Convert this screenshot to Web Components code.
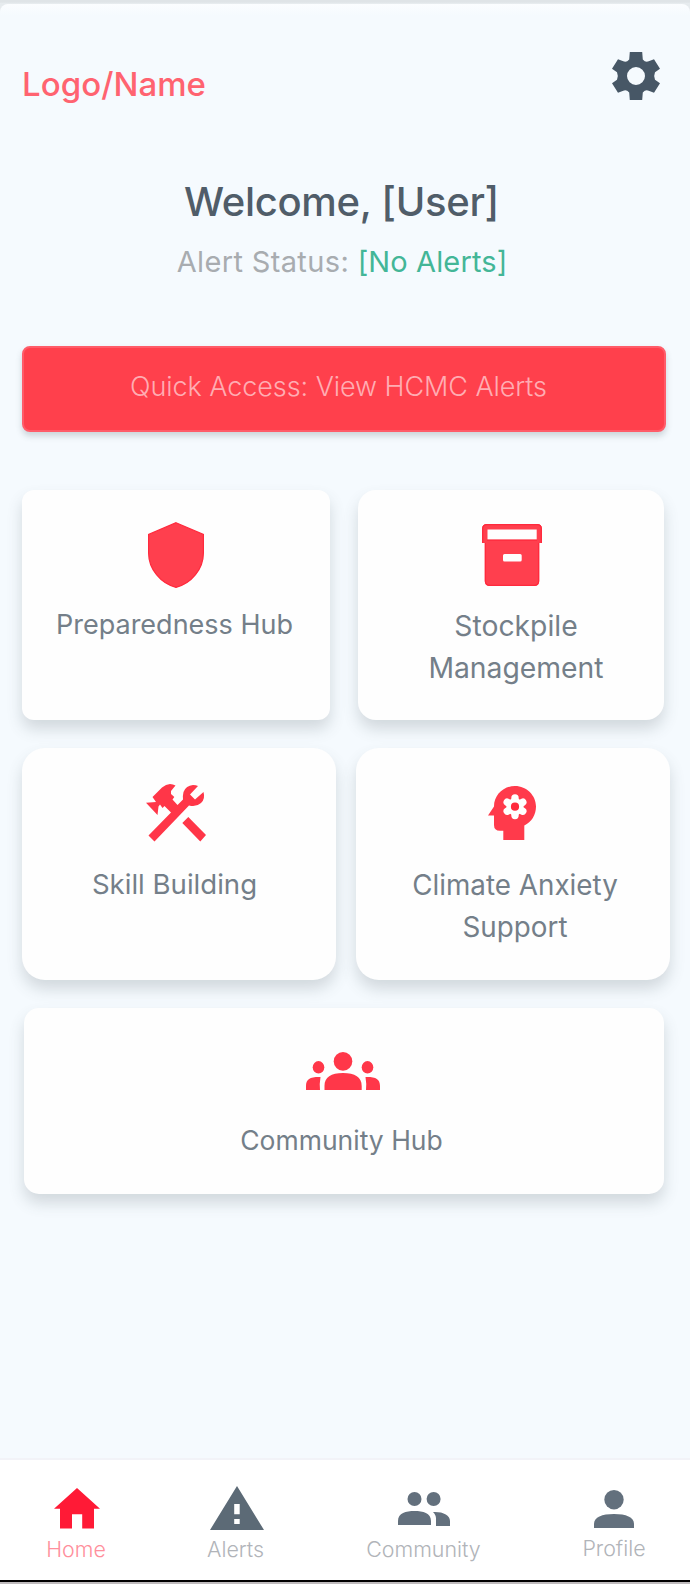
<!DOCTYPE html>
<html lang="en">
<head>
<meta charset="utf-8">
<title>Home</title>
<style>
html, body { margin: 0; padding: 0; }
body { width: 690px; height: 1584px; overflow: hidden; font-family: Inter, "Liberation Sans", sans-serif; }
</style>
</head>
<body>
<app-screen>
  <app-header slot="top">Logo/Name</app-header>
  <app-greeting slot="top" status="[No Alerts]">Welcome, [User]</app-greeting>
  <alert-button>Quick Access: View HCMC Alerts</alert-button>
  <card-row style="--cols:308px 306px;--gap:28px;margin-top:58px;height:230px">
    <hub-card icon="shield" style="--r:12px;--pt:32px;--shift:-3px;--gap:16px">Preparedness Hub</hub-card>
    <hub-card icon="box" style="--r:18px;--pt:34px;--ishift:2px;--shift:10px;--gap:19px;--fs:28.3px">Stockpile<br>Management</hub-card>
  </card-row>
  <card-row style="--cols:314px 314px;--gap:20px;margin-top:28px;height:232px">
    <hub-card icon="tools" style="--r:23px;--pt:36px;--ishift:-6px;--shift:-9px;--gap:21px;--fs:27.6px">Skill Building</hub-card>
    <hub-card icon="mind" style="--r:23px;--pt:38px;--ishift:-2px;--shift:4px;--gap:23.5px;--fs:27.8px">Climate Anxiety<br>Support</hub-card>
  </card-row>
  <card-row style="--cols:640px;margin:28px 0 0 2px;height:186px">
    <hub-card icon="group" style="--r:15px;--pt:44px;--ishift:-2px;--shift:-5px;--gap:29px;--fs:26.5px">Community Hub</hub-card>
  </card-row>
  <app-nav slot="bottom">
    <nav-item icon="home" active>Home</nav-item>
    <nav-item icon="alert">Alerts</nav-item>
    <nav-item icon="people">Community</nav-item>
    <nav-item icon="person" style="padding-left:10px;--up:-1.5px">Profile</nav-item>
  </app-nav>
</app-screen>

<script>
const ICONS = {
  gear: [48, 48, `<path fill-rule="evenodd" d="M17.8 0H30.2L30.8 7.4Q33.5 10.6 36.7 9.2L42 7.2L48 16.7L43 20.3Q41.4 24 43 27.7L48 31.3L42 40.8L36.7 38.8Q33.5 37.4 30.8 40.6L30.2 48H17.8L17.2 40.6Q14.5 37.4 11.3 38.8L6 40.8L0 31.3L5 27.7Q6.6 24 5 20.3L0 16.7L6 7.2L11.3 9.2Q14.5 10.6 17.2 7.4ZM24 15a9 9 0 1 0 0 18a9 9 0 1 0 0-18Z" fill="#475766"/>`],
  shield: [56, 66, `<path d="M28 .7L55.4 12.4V31C55.4 47 43.5 61.5 28 65.4C12.5 61.5.6 47 .6 31V12.4Z" fill="#ff3f4e" stroke="#ff2a3d" stroke-width="1.2"/>`],
  box: [60, 62, `<path fill-rule="evenodd" d="M5 0H55Q60 0 60 5V19H57.2V57Q57.2 62 52 62H8Q2.8 62 2.8 57V19H0V5Q0 0 5 0ZM5.5 5.5V15.7H54.7V5.5ZM22.5 30Q21 30 21 31.5V36Q21 37.5 22.5 37.5H38.2Q39.7 37.5 39.7 36V31.5Q39.7 30 38.2 30Z" fill="#ff3f4e"/><path d="M.7 19V5Q.7 .7 5 .7H55Q59.3 .7 59.3 5V19M3.4 19V57Q3.4 61.4 8 61.4H52Q56.6 61.4 56.6 57V19M5 16.2H55" fill="none" stroke="#ff2a3d" stroke-width="1.3"/>`],
  tools: [60, 58, `<path d="M0 18.700L10 18L6.500 13L16 3.500Q20 0 24 0Q27 .3 29.500 1.500L25 7V10L28.300 13L26.500 15.500L31.500 21L37 15.500Q36.500 12 37.500 8Q40 1.500 47 1Q50 1 52 2L44 10.500L49 15.500L57.500 8Q59.500 15 55 19Q50 23.500 43 21.500L8.500 57.500L2.500 51.500L25 28.500L18.500 22L16.500 24L14 20.500L12.500 22.500L11.500 31ZM36.300 39L42.300 33L60 51L54.300 57.500Z" fill="#ff3648"/>`],
  mind: [48, 54, `<path d="M27 0C38.6 0 48 9.4 48 20.5C48 29 43.5 36 36.3 39.5V54H15.3V44.8H12Q6 44.8 6 39V29.500H0L6 20.5C6 9 15.4 0 27 0Z" fill="#ff3a4b"/><g stroke="#fff" stroke-width="7.4" stroke-linecap="round"><path d="M27 12V29.5M19.2 16.2L34.8 25.2M34.8 16.2L19.2 25.2"/></g><circle cx="27" cy="20.7" r="8.6" fill="#fff"/><circle cx="27" cy="20.7" r="4.1" fill="#ff2a3d"/>`],
  group: [74, 38, `<g fill="#ff3749"><circle cx="37" cy="9.4" r="9.3"/><ellipse cx="12.5" cy="15.3" rx="5.8" ry="6.2"/><ellipse cx="61.5" cy="15.3" rx="5.8" ry="6.2"/><path d="M18.5 38V34C18.5 25 25 21 37 21S55.700 25 55.700 34V38ZM0 38V34C0 27 4.500 24.700 14.500 25Q13.300 32 14 38ZM74 38V34C74 27 69.500 24.700 59.500 25Q60.700 32 60 38Z"/></g>`],
  home: [46, 41, `<path d="M23 0L46 20.700H40V40.500H28.200V26.300H18V40.500H6V20.700H0Z" fill="#ff1a36"/>`],
  alert: [54, 44, `<path fill-rule="evenodd" d="M27 0L54 44H0ZM24.200 18V28.200H29.700V18ZM24.200 33V38H29.700V33Z" fill="#5c6a76"/>`],
  people: [52, 34, `<g fill="#63707d"><circle cx="16.500" cy="7" r="7"/><circle cx="35.600" cy="7" r="7"/><path d="M0 33V29C0 21 8 19 16.500 19S33 21 33 29V33ZM35 20C45 19.500 52 23 52 29V34H38V29Q38.500 23 35 20Z"/></g>`],
  person: [40, 38, `<g fill="#63707d"><circle cx="20" cy="9.700" r="9.700"/><path d="M0 38V34C0 27 8 24 20 24S40 27 40 34V38Z"/></g>`]
};
const icon = n => { const [w, h, s] = ICONS[n]; return `<svg width="${w}" height="${h}" viewBox="0 0 ${w} ${h}" aria-hidden="true">${s}</svg>`; };

const define = (name, render) => customElements.define(name, class extends HTMLElement {
  constructor() { super(); this.attachShadow({ mode: "open" }); }
  connectedCallback() { this.shadowRoot.innerHTML = render(this); }
});

define("app-screen", () => `<style>
  :host { display: flex; flex-direction: column; box-sizing: border-box; height: 1584px; background: #f5fafe;
    border-bottom: 2px solid #bfbbbd; }
  .edge { height: 4px; flex: none; background: linear-gradient(#dfe4e7 50%, #e9eef1); }
  .content { flex: 1; min-width: 0; box-sizing: border-box; padding: 0 20px 0 22px; background: linear-gradient(#fbfdff, #f5fafe 12px); border-radius: 8px 8px 0 0; }
  .wrap { flex: 1; min-height: 0; display: flex; background: #e6ebee; }
</style><div class="edge"></div><div class="wrap"><main class="content"><slot name="top"></slot><slot></slot></main></div><slot name="bottom"></slot>`);

define("app-header", () => `<style>
  :host { display: flex; justify-content: space-between; align-items: flex-start; height: 148px; padding-right: 10px; box-sizing: border-box; }
  .logo { margin-top: 60px; line-height: 40px; font-size: 33px; font-weight: 500; color: #ff6370; letter-spacing: .05px; }
  svg { display: block; margin-top: 48px; }
</style><div class="logo"><slot></slot></div>${icon("gear")}`);

define("app-greeting", el => `<style>
  :host { display: block; height: 130px; padding: 25px 9px 0 0; box-sizing: border-box; text-align: center; white-space: nowrap; }
  h1 { margin: 0; font-size: 40px; line-height: 50px; font-weight: 500; color: #505d69; letter-spacing: -.33px; }
  p { margin: 15px 0 0; padding-left: 1px; font-size: 29px; line-height: 40px; color: #a8acb0; letter-spacing: .36px; }
  b { font-weight: 400; color: #43b697; letter-spacing: .12px; }
</style><h1><slot></slot></h1><p><span>Alert Status:</span> <b>${el.getAttribute("status")}</b></p>`);

define("alert-button", () => `<style>
  :host { display: block; margin-top: 64px; }
  button { all: unset; display: flex; justify-content: center; box-sizing: border-box; width: 644px; height: 86px; padding: 18px 11px 0 0;
    border: 2px solid #ff5c69; border-radius: 8px; background: #ff404c; color: #ffadb3; font-size: 27px; line-height: 41px; font-weight: 300; letter-spacing: -.07px;
    box-shadow: 0 4px 6px rgba(60,80,85,.22); }
</style><button><span><slot></slot></span></button>`);

define("card-row", () => `<style>
  :host { display: grid; grid-template-columns: var(--cols); column-gap: var(--gap, 0); }
</style><slot></slot>`);

define("hub-card", el => `<style>
  :host { display: flex; flex-direction: column; align-items: center; box-sizing: border-box; padding-top: var(--pt);
    background: #fefefe; border-radius: var(--r); box-shadow: 0 9px 15px rgba(70,85,92,.2); }
  svg { display: block; margin-left: var(--ishift, 0px); flex: none; }
  .label { margin: var(--gap) 0 0 var(--shift); font-size: var(--fs, 27px); line-height: 42px; color: #747f89; text-align: center; white-space: nowrap; }
</style>${icon(el.getAttribute("icon"))}<div class="label"><slot></slot></div>`);

define("app-nav", () => `<style>
  :host { display: grid; grid-template-columns: 152px 167px 209px 162px; height: 124px; box-sizing: border-box; flex: none;
    background: #fff; border-top: 2px solid #f2f3f8; border-bottom: 2px solid #000; }
</style><slot></slot>`);

define("nav-item", el => `<style>
  :host { display: flex; flex-direction: column; align-items: center; box-sizing: border-box; }
  .pic { height: 70px; display: flex; align-items: flex-end; }
  .pic svg { display: block; margin: ${({ home: "0 0 1px 2px", alert: "0 0 0 3px", people: "0 0 4px 1px", person: "0 0 2px" })[el.getAttribute("icon")]}; }
  .label { margin-top: calc(4.4px + var(--up, 0px)); font-size: 21.4px; line-height: 30px; font-weight: 300; color: ${el.hasAttribute("active") ? "#ff8f9c" : "#b1b4b9"}; }
</style><div class="pic">${icon(el.getAttribute("icon"))}</div><div class="label"><slot></slot></div>`);
</script>
</body>
</html>
